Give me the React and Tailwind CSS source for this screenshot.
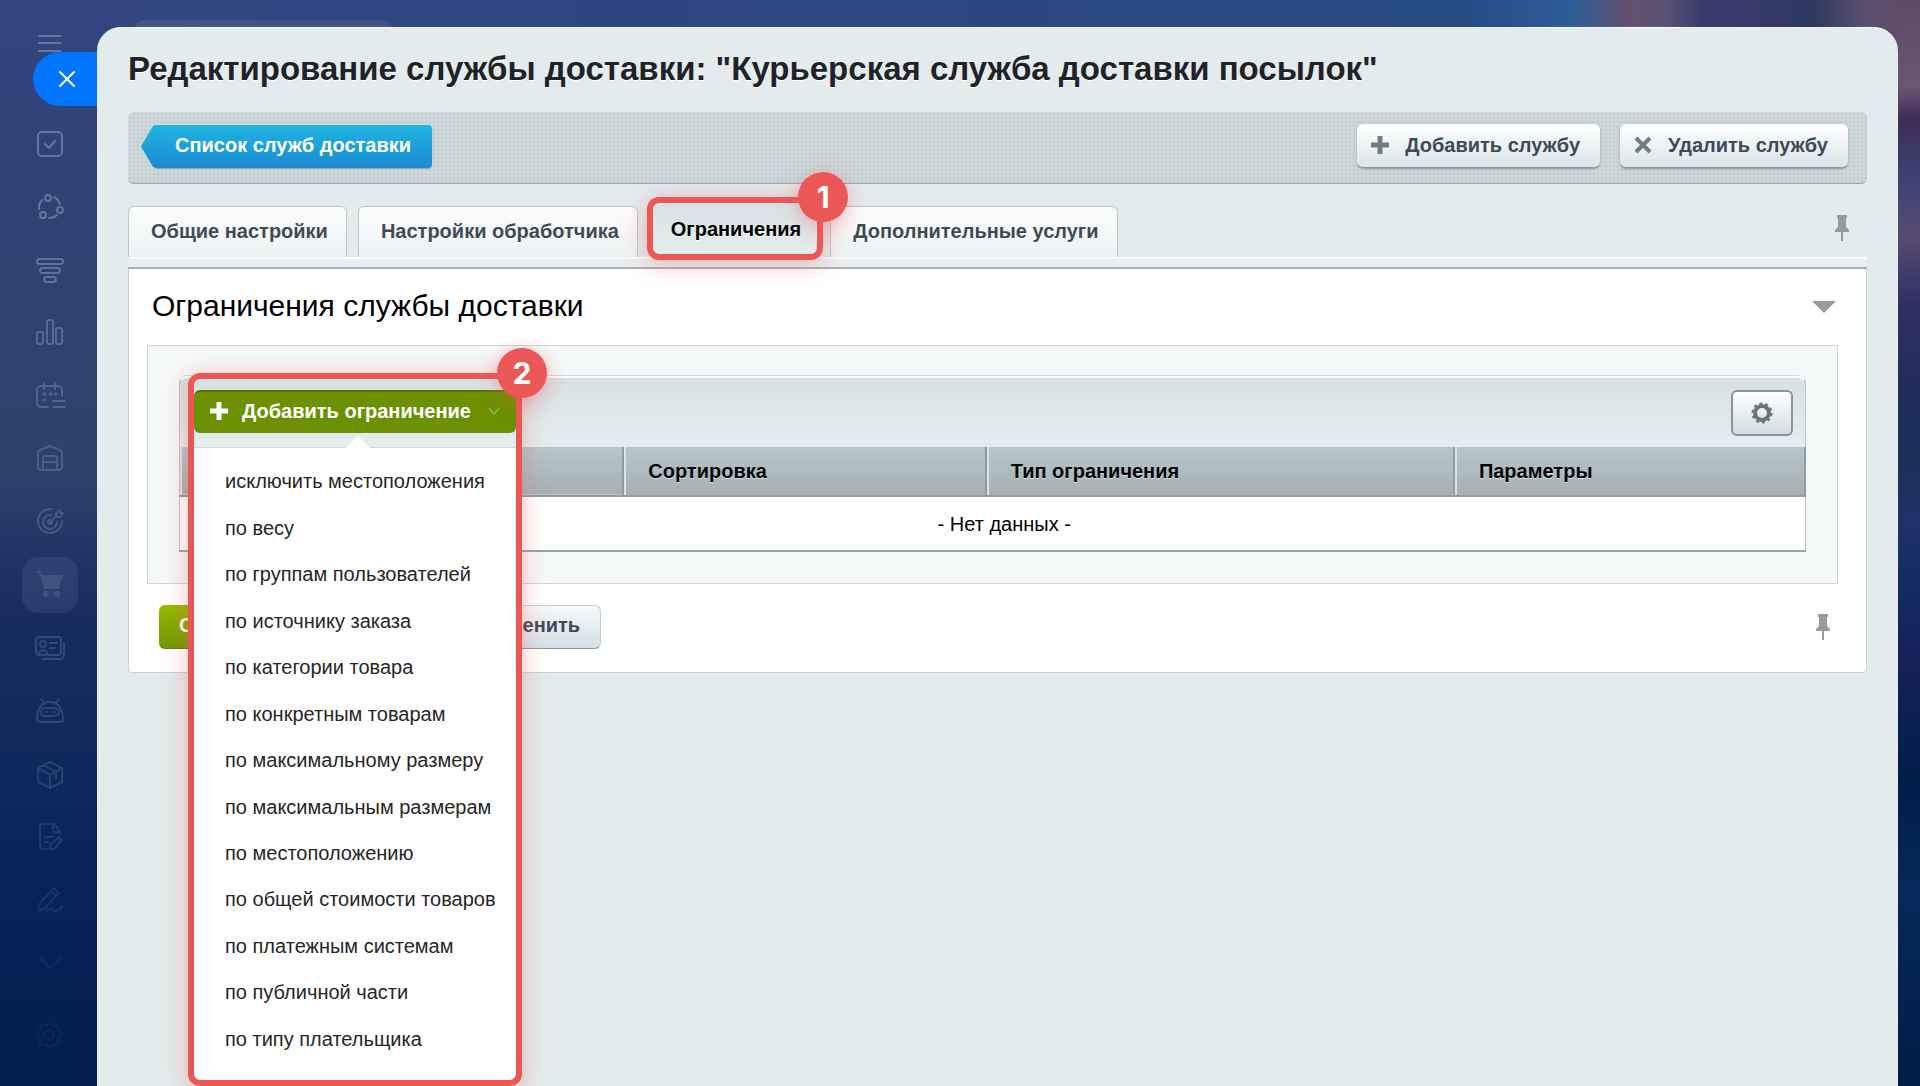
// App.jsx
const restrictions = [
    "исключить местоположения",
    "по весу",
    "по группам пользователей",
    "по источнику заказа",
    "по категории товара",
    "по конкретным товарам",
    "по максимальному размеру",
    "по максимальным размерам",
    "по местоположению",
    "по общей стоимости товаров",
    "по платежным системам",
    "по публичной части",
    "по типу плательщика",
];

const tabs = [
    { title: "Общие настройки" },
    { title: "Настройки обработчика" },
    { title: "Ограничения", active: true },
    { title: "Дополнительные услуги" },
];

const columns = [
    { title: "", width: "w-[27.3%]" },
    { title: "Сортировка", width: "w-[22.3%]" },
    { title: "Тип ограничения", width: "w-[28.8%]" },
    { title: "Параметры", width: "w-[21.6%]" },
];

const sidebarIcons = [
    {
        name: "Задачи",
        color: "text-[#64749d]",
        shape: (
            <>
                <rect x="2" y="2" width="24" height="24" rx="4" />
                <path d="M9 14l4 4 6-7" />
            </>
        ),
    },
    {
        name: "Сообщество",
        color: "text-[#64749d]",
        shape: (
            <>
                <circle cx="12" cy="5" r="3" />
                <circle cx="24" cy="17" r="3" />
                <circle cx="7" cy="22" r="3" />
                <path d="M18 4a12 12 0 0 1 6 7M3 16a12 12 0 0 1 3-9M13 25a12 12 0 0 0 8-3" />
            </>
        ),
    },
    {
        name: "CRM",
        color: "text-[#60719a]",
        shape: (
            <>
                <rect x="1" y="3" width="26" height="5" rx="2.5" />
                <rect x="4" y="12" width="20" height="5" rx="2.5" />
                <rect x="8" y="21" width="12" height="5" rx="2.5" />
            </>
        ),
    },
    {
        name: "Аналитика",
        color: "text-[#576992]",
        shape: (
            <>
                <rect x="1" y="13" width="6" height="12" rx="2" />
                <rect x="11" y="1" width="6" height="24" rx="2" />
                <rect x="20" y="9" width="6" height="16" rx="2" />
            </>
        ),
    },
    {
        name: "Календарь",
        color: "text-[#516389]",
        shape: (
            <>
                <path d="M12 25H5a4 4 0 0 1-4-4V8a4 4 0 0 1 4-4h17a4 4 0 0 1 4 4v6M8 1v6M19 1v6M17 19h12M17 25h12" />
                <path d="M8 12h1M14 12h1M19 12h1M8 18h1" strokeWidth="3" />
            </>
        ),
    },
    {
        name: "Склад",
        color: "text-[#4a5d82]",
        shape: (
            <>
                <path d="M2 8q0-2 2-3l10-4 10 4q2 1 2 3v14a3 3 0 0 1-3 3H5a3 3 0 0 1-3-3z" />
                <path d="M7 25V13a2 2 0 0 1 2-2h10a2 2 0 0 1 2 2v12M7 17h14" />
            </>
        ),
    },
    {
        name: "Маркетинг",
        color: "text-[#455884]",
        shape: (
            <>
                <path d="M15 1a12 12 0 1 0 11 12M15 7a7 7 0 1 0 6 7M14 14l7-7M20 8V5l4-3v3h3l-3 4h-3" />
                <circle cx="14" cy="14" r="2" />
            </>
        ),
    },
    {
        name: "Магазин",
        color: "text-[#405380]",
        active: true,
        shape: (
            <g fill="currentColor">
                <path d="M1 1h3l5 16h13l4-12H5" />
                <circle cx="10" cy="23" r="2" />
                <circle cx="21" cy="23" r="2" />
            </g>
        ),
    },
    {
        name: "Контакты",
        color: "text-[#34497a]",
        shape: (
            <>
                <rect x="0" y="3" width="25" height="18" rx="3" />
                <circle cx="7" cy="10" r="3" />
                <path d="M3 20c0-5 8-5 8 0M14 9h7M14 14h5M28 9v12a4 4 0 0 1-4 4H7" />
            </>
        ),
    },
    {
        name: "Роботы",
        color: "text-[#2f4575]",
        shape: (
            <>
                <path d="M5 2l3 4M23 2l-3 4M1 22c0-23 26-23 26 0q0 3-3 3H4q-3 0-3-3z" />
                <rect x="5" y="11" width="18" height="8" rx="4" />
                <path d="M10 15h1M17 15h1" />
            </>
        ),
    },
    {
        name: "Приложения",
        color: "text-[#28406f]",
        shape: (
            <path d="M14 2l12 6v14l-12 6-12-6V8zM2 8l12 7 12-7M14 15v13M8 5l12 7v6" />
        ),
    },
    {
        name: "Документы",
        color: "text-[#223a6a]",
        shape: (
            <path d="M11 26H7a3 3 0 0 1-3-3V4a3 3 0 0 1 3-3h11l6 7v3M17 1v8h7M9 14h8M9 19h4M14 26v-4l9-8 3 3-8 9z" />
        ),
    },
    {
        name: "Подпись",
        color: "text-[#1b3463]",
        shape: (
            <path d="M2 25l2-8L18 2l5 5L9 22zM15 5l5 5M10 25c6-6 6 2 10 0s6-2 6-5" />
        ),
    },
    {
        name: "Ещё",
        color: "text-[#122d5c]",
        shape: <path d="M4 9l10 10L24 9" />,
    },
];

function PinIcon() {
    return (
        <svg viewBox="0 0 14 26" className="w-3.5 h-6.5 fill-[#939c9f]" aria-hidden="true">
            <path d="M2 0h10v3h-1v9l3 3v2H8v9H6v-9H0v-2l3-3V3H2z" />
        </svg>
    );
}

function GearIcon() {
    return (
        <svg viewBox="0 0 22 22" className="w-5.5 h-5.5" fill="none" stroke="#697479" aria-hidden="true">
            <circle cx="11" cy="11" r="7" strokeWidth="4" />
            <circle cx="11" cy="11" r="9.5" strokeWidth="2" strokeDasharray="3 2.97" />
        </svg>
    );
}

function Badge({ children }) {
    return (
        <span className="absolute -top-[31px] -right-[31px] w-12.5 h-12.5 rounded-full bg-[#eb5757] shadow-[0_4px_20px_rgba(235,87,87,0.45)] flex items-center justify-center font-[Inter,sans-serif] text-3xl font-bold text-white">
            {children}
        </span>
    );
}

function LightButton({ icon, children }) {
    return (
        <button
            type="button"
            className="h-11 pl-3.5 pr-5 flex items-center gap-4 rounded-md bg-linear-to-b from-white to-[#dbe5ea] border-b border-[#8d999f] shadow-[0_1px_2px_rgba(0,0,0,0.3)] text-xl font-bold text-[#3f4b54]"
        >
            {icon}
            {children}
        </button>
    );
}

function Sidebar() {
    return (
        <aside className="relative w-[97px] shrink-0 flex flex-col items-center pt-7.5">
            <button type="button" aria-label="Меню" className="w-7 h-7 text-[#65759f]">
                <svg viewBox="0 0 28 28" className="w-7 h-7" stroke="currentColor" strokeWidth="2">
                    <path d="M3 6h23M3 13h23M3 21h23" />
                </svg>
            </button>
            <button
                type="button"
                aria-label="Закрыть"
                className="absolute right-0 top-[52px] w-16 h-[54px] pl-1 rounded-l-full bg-[#0075ff] flex items-center justify-center"
            >
                <svg viewBox="0 0 16 16" className="w-4 h-4" stroke="white" strokeWidth="2" strokeLinecap="round">
                    <path d="M1 1l14 14M15 1L1 15" />
                </svg>
            </button>
            <nav className="mt-14.5 pl-0.5 flex flex-col gap-[7px]">
                {sidebarIcons.map((item) => (
                    <a
                        key={item.name}
                        href="#"
                        aria-label={item.name}
                        className={`w-14 h-14 rounded-2xl flex items-center justify-center ${item.color} ${item.active ? "bg-white/7" : ""}`}
                    >
                        <svg
                            viewBox="0 0 28 28"
                            className="w-7 h-7 overflow-visible"
                            fill="none"
                            stroke="currentColor"
                            strokeWidth="2"
                            strokeLinecap="round"
                            strokeLinejoin="round"
                        >
                            {item.shape}
                        </svg>
                    </a>
                ))}
            </nav>
            <a href="#" aria-label="Настройки" className="mt-4 w-14 h-14 flex items-center justify-center text-[#0c2856]">
                <svg viewBox="0 0 28 28" className="w-7 h-7" fill="none" stroke="currentColor" strokeWidth="2">
                    <circle cx="14" cy="14" r="5" />
                    <path d="M14 2l3 3 5-1 1 5 4 5-4 4v5l-6 1-3 3-3-3-6-1v-5l-4-4 4-5 1-5 5 1z" />
                </svg>
            </a>
        </aside>
    );
}

function RestrictionMenu() {
    return (
        <div className="relative z-10 w-[322px]">
            <button
                type="button"
                className="w-full h-[43px] px-4 pb-1 flex items-center rounded-md bg-[#6b9000] border-t-2 border-[#567400] text-xl font-bold text-white"
            >
                <svg viewBox="0 0 18 18" className="w-4.5 h-4.5 mr-3.5" stroke="white" strokeWidth="5">
                    <path d="M9 0v18M0 9h18" />
                </svg>
                Добавить ограничение
                <svg viewBox="0 0 12 8" className="w-3 h-2 ml-auto" fill="none" stroke="#8fae45" strokeWidth="2">
                    <path d="M1 1l5 6 5-6" />
                </svg>
            </button>
            {/* Dropdown list */}
            <div className="absolute top-[57px] left-0 w-full h-[633px] bg-white border-t border-[#cfdadd] rounded-b-md">
                <svg viewBox="0 0 26 13" className="absolute -top-3 left-[151px] w-6.5 h-[13px] fill-white">
                    <path d="M0 13L13 0l13 13z" />
                </svg>
                <ul className="h-full pt-2.5 pb-4.5 pl-[31px] flex flex-col text-xl text-[#262626]">
                    {restrictions.map((item) => (
                        <li key={item} className="flex-1 flex items-center whitespace-nowrap">
                            <a href="#">{item}</a>
                        </li>
                    ))}
                </ul>
            </div>
            <div className="absolute -top-[17px] -inset-x-1.5 h-[713px] rounded-xl border-6 border-[#eb5757] shadow-[0_4px_24px_rgba(235,87,87,0.4)] pointer-events-none">
                <Badge>2</Badge>
            </div>
        </div>
    );
}

function Toolbar() {
    return (
        <div className="mt-[23px] h-[72px] px-3 flex items-center rounded-md border-b border-[#9aa8ab] bg-[#cdd7da] bg-[radial-gradient(#c0ccd0_1px,transparent_1px)] bg-size-[4px_4px]">
            <a href="#" className="mb-0.5 flex h-[43px] text-xl font-bold text-white">
                <svg viewBox="0 0 16 43" className="w-4 h-[43px]" preserveAspectRatio="none" aria-hidden="true">
                    <defs>
                        <linearGradient id="back" x1="0" y1="0" x2="0" y2="1">
                            <stop offset="0" stopColor="#21b5e2" />
                            <stop offset="1" stopColor="#1a8bd1" />
                        </linearGradient>
                    </defs>
                    <path d="M16 0L13 1 1 21.5 13 42l3 1z" fill="url(#back)" />
                </svg>
                <span className="pl-[19px] pr-[21px] pb-1 flex items-center rounded-r-sm bg-linear-to-b from-[#21b5e2] to-[#1a8bd1] shadow-[0_1px_1px_rgba(0,0,0,0.25)]">
                    Список служб доставки
                </span>
            </a>
            <div className="ml-auto mr-[7px] mb-1 flex gap-5">
                <LightButton
                    icon={
                        <svg viewBox="0 0 18 18" className="w-4.5 h-4.5" stroke="#737c81" strokeWidth="5">
                            <path d="M9 0v18M0 9h18" />
                        </svg>
                    }
                >
                    Добавить службу
                </LightButton>
                <LightButton
                    icon={
                        <svg viewBox="0 0 18 18" className="w-4.5 h-4.5" stroke="#737c81" strokeWidth="4">
                            <path d="M2 2l14 14M16 2L2 16" />
                        </svg>
                    }
                >
                    Удалить службу
                </LightButton>
            </div>
        </div>
    );
}

function Tabs() {
    return (
        <div className="mt-3.5 flex items-end">
            <nav className="flex items-end gap-[11px] text-xl font-bold [text-shadow:0_1px_0_#fff]">
                {tabs.map((tab) =>
                    tab.active ? (
                        <a
                            key={tab.title}
                            href="#"
                            className="relative h-[59px] pl-[22px] pr-[18px] pt-0.5 flex items-center bg-linear-to-b from-[#d7e0e2] to-[#e6edee] text-black"
                        >
                            {tab.title}
                            <span className="absolute -left-0.5 -right-1 -top-px h-[63px] rounded-xl border-6 border-[#eb5757] shadow-[0_4px_24px_rgba(235,87,87,0.4)] z-10 [text-shadow:none]">
                                <Badge>1</Badge>
                            </span>
                        </a>
                    ) : (
                        <a
                            key={tab.title}
                            href="#"
                            className="h-[51px] pl-[22px] pr-[18px] pb-0.5 flex items-center rounded-t-md border border-b-0 border-[#bcc7ca] bg-linear-to-b from-[#fcfdfd] to-[#eef1f3] text-[#3f4b54]"
                        >
                            {tab.title}
                        </a>
                    ),
                )}
            </nav>
            <button type="button" aria-label="Закрепить" className="ml-auto mr-[18px] mb-4">
                <PinIcon />
            </button>
        </div>
    );
}

function RestrictionsGrid() {
    return (
        <div className="ml-[18px] mr-7 pt-[30px] px-[31px] pb-[31px] bg-[#f5f8f9] border border-[#ccd8da]">
            <div className="h-[71px] pl-[14px] pr-3 flex items-start pt-3 rounded-t-lg border-t-2 border-x border-t-white border-x-[#b9c4c8] bg-linear-to-b from-[#d7e0e2] to-[#e6edef] shadow-[0_-1px_0_#d5dee0]">
                <RestrictionMenu />
                <button
                    type="button"
                    aria-label="Настроить"
                    className="ml-auto w-[62px] h-[46px] flex items-center justify-center rounded-md border-2 border-[#87959a] bg-linear-to-b from-white to-[#d3dce0]"
                >
                    <GearIcon />
                </button>
            </div>
            <table className="w-full table-fixed border-collapse text-xl text-black border-x border-b-2 border-x-[#b9c4c8] border-b-[#96a4a8]">
                <thead>
                    <tr className="h-[49px] bg-linear-to-b from-[#b7c6cd] to-[#a5b1b1] border-b-2 border-[#929e9f] [text-shadow:0_1px_0_#d5dee0]">
                        {columns.map((column) => (
                            <th
                                key={column.title}
                                className={`${column.width} pl-6 text-left font-bold border-r-2 border-[#8f9c9f] shadow-[inset_2px_0_0_#dbe3e5]`}
                            >
                                {column.title}
                            </th>
                        ))}
                    </tr>
                </thead>
                <tbody>
                    <tr className="h-[55px] bg-white">
                        <td colSpan={4} className="pl-6 text-center">
                            - Нет данных -
                        </td>
                    </tr>
                </tbody>
            </table>
        </div>
    );
}

function App() {
    return (
        <div className="h-screen overflow-hidden flex font-['Liberation_Sans',Arial,sans-serif] bg-[linear-gradient(to_bottom,#32457f_0%,#2f4274_20%,#2f4168_44%,#1f3167_52%,#162b60_58%,#122b5e_66%,#06245a_80%,#001f4e_100%)]">
            <Sidebar />
            <div className="flex-1 min-w-0 relative flex flex-col pt-[27px] pr-[22px]">
                {/* Blurred wallpaper */}
                <div className="absolute inset-x-0 top-0 h-[60px] bg-[linear-gradient(to_right,#32457f_0%,#2b4781_50%,#264b85_75%,#2d5d97_81%,#64506d_84%,#5b5374_86%,#3a3b6d_88%,#343a68_92%,#2c385f_94%,#5a5070_97%,#654a67_100%)]" />
                <div className="absolute right-0 top-0 bottom-0 w-[22px] bg-[linear-gradient(to_bottom,#5c4a67_0%,#6a5672_8%,#3f2b55_11%,#3b4273_16%,#564a73_22%,#2f2f64_28%,#1f2c5c_36%,#1a3058_43%,#20306a_48%,#122c62_54%,#17215a_60%,#001d4a_72%,#06285a_82%,#001c48_100%)]" />
                <div className="absolute left-9 top-5 w-65 h-8 rounded-xl bg-white/8" />

                <main className="relative flex-1 px-[31px] pt-[21px] rounded-t-[24px] border-t border-white bg-[#e3ebec]">
                    <h1 className="text-[33px] leading-10 font-bold text-[#1f2328] [text-shadow:0_1px_0_#fff]">
                        Редактирование службы доставки: "Курьерская служба доставки посылок"
                    </h1>
                    <Toolbar />
                    <Tabs />
                    <div className="h-3 border-t-2 border-b-2 border-t-[#f9fbfb] border-b-[#a5b2b4] bg-[#e9eef1]" />
                    <section className="bg-white border border-t-0 border-[#c8d3d6] pb-[23px] rounded-b-sm">
                        <div className="h-[76px] pl-[23px] pr-[30px] flex items-center">
                            <h2 className="pb-1 text-[30px] text-black">Ограничения службы доставки</h2>
                            <button type="button" aria-label="Свернуть" className="ml-auto">
                                <svg viewBox="0 0 24 12" className="w-6 h-3 fill-[#929b9f]">
                                    <path d="M0 0h24L12 12z" />
                                </svg>
                            </button>
                        </div>
                        <RestrictionsGrid />
                        <div className="mt-[21px] pl-[30px] pr-9 flex items-center gap-px">
                            <button
                                type="button"
                                className="h-11 px-5 pb-1 rounded-md bg-linear-to-b from-[#97b800] to-[#6f9a00] border-b border-[#5f8200] text-xl font-bold text-white"
                            >
                                Сохранить
                            </button>
                            <button
                                type="button"
                                className="h-11 px-5 pb-1 rounded-md bg-linear-to-b from-[#f7f9fa] to-[#d5e0e5] border border-[#c5d0d4] border-b-[#8d999f] text-xl font-bold text-[#3f4b54]"
                            >
                                Применить
                            </button>
                            <button
                                type="button"
                                className="h-11 px-5 pb-1 rounded-md bg-linear-to-b from-[#f7f9fa] to-[#d5e0e5] border border-[#c5d0d4] border-b-[#8d999f] text-xl font-bold text-[#3f4b54]"
                            >
                                Отменить
                            </button>
                            <button type="button" aria-label="Закрепить панель" className="ml-auto">
                                <PinIcon />
                            </button>
                        </div>
                    </section>
                </main>
            </div>
        </div>
    );
}

export default App;
